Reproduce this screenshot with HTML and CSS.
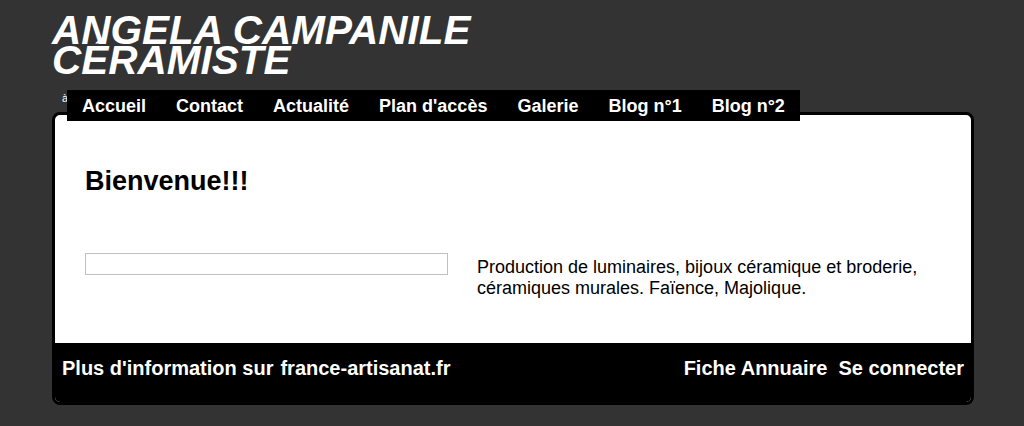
FILE: index.html
```html
<!DOCTYPE html>
<html lang="fr">
<head>
    <meta charset="UTF-8">
    <meta name="viewport" content="width=device-width, initial-scale=1.0">
    <link rel="stylesheet" href="styles.css">
    <title>Angela Campanile Céramiste</title>
</head>
<body>
    <div class="page">
        <h1 class="site-title">ANGELA CAMPANILE<br>CÉRAMISTE</h1>
        <div class="menu-row">
            <p class="tagline">à votre service</p>
            <ul class="menu">
                <li><a href="#">Accueil</a></li>
                <li><a href="#">Contact</a></li>
                <li><a href="#">Actualité</a></li>
                <li><a href="#">Plan d'accès</a></li>
                <li><a href="#">Galerie</a></li>
                <li><a href="#">Blog n°1</a></li>
                <li><a href="#">Blog n°2</a></li>
            </ul>
        </div>
        <div class="box">
            <div class="content">
                <h2>Bienvenue!!!</h2>
                <div class="row">
                    <div class="frame"></div>
                    <p class="intro">Production de luminaires, bijoux céramique et broderie, céramiques murales. Faïence, Majolique.</p>
                </div>
            </div>
            <div class="foot">
                <div class="foot-group">
                    <span>Plus d'information sur</span>
                    <a href="#">france-artisanat.fr</a>
                </div>
                <div class="foot-group right">
                    <a href="#">Fiche Annuaire</a>
                    <a href="#">Se connecter</a>
                </div>
            </div>
        </div>
    </div>
</body>
</html>
```

FILE: styles.css
```css
body {
    margin: 0;
    background-color: #333333;
    font-family: "Liberation Sans", Arial, sans-serif;
    color: #000;
}

.page {
    width: 922px;
    margin-left: 52px;
}

.site-title {
    margin: 15px 0 0;
    font-size: 40.5px;
    line-height: 30px;
    font-style: italic;
    font-weight: bold;
    color: #fff;
    height: 60px;
}

.menu-row {
    position: relative;
    height: 22px;
    margin-top: 15px;
}

.tagline {
    margin: 0;
    padding: 2px 0 0 10px;
    font-size: 11px;
    color: #fff;
}

.menu {
    position: absolute;
    left: 15px;
    top: 0;
    display: flex;
    margin: 0;
    padding: 0;
    list-style: none;
    background-color: #000;
    z-index: 2;
}

.menu a {
    display: block;
    padding: 1px 15px 0;
    line-height: 30px;
    font-size: 18px;
    font-weight: bold;
    color: #fff;
    text-decoration: none;
}

.box {
    border: 3px solid #000;
    border-radius: 8px;
    overflow: hidden;
    background-color: #fff;
}

.content {
    padding: 51px 30px 44px;
}

.content h2 {
    margin: 0 0 56px;
    font-size: 27px;
    font-weight: bold;
}

.row {
    display: grid;
    grid-template-columns: 363px 1fr;
    gap: 29px;
    align-items: start;
}

.frame {
    height: 22px;
    border: 1px solid #c0c0c0;
    box-sizing: border-box;
}

.intro {
    margin: 0;
    padding-top: 4px;
    font-size: 18px;
    line-height: 21px;
}

.foot {
    display: flex;
    justify-content: space-between;
    padding: 14px 7px 22px;
    background-color: #000;
    font-size: 20px;
    font-weight: bold;
    color: #fff;
}

.foot-group {
    display: flex;
    gap: 7px;
}

.foot-group.right {
    gap: 11px;
}

.foot a {
    color: #fff;
    text-decoration: none;
}
```
